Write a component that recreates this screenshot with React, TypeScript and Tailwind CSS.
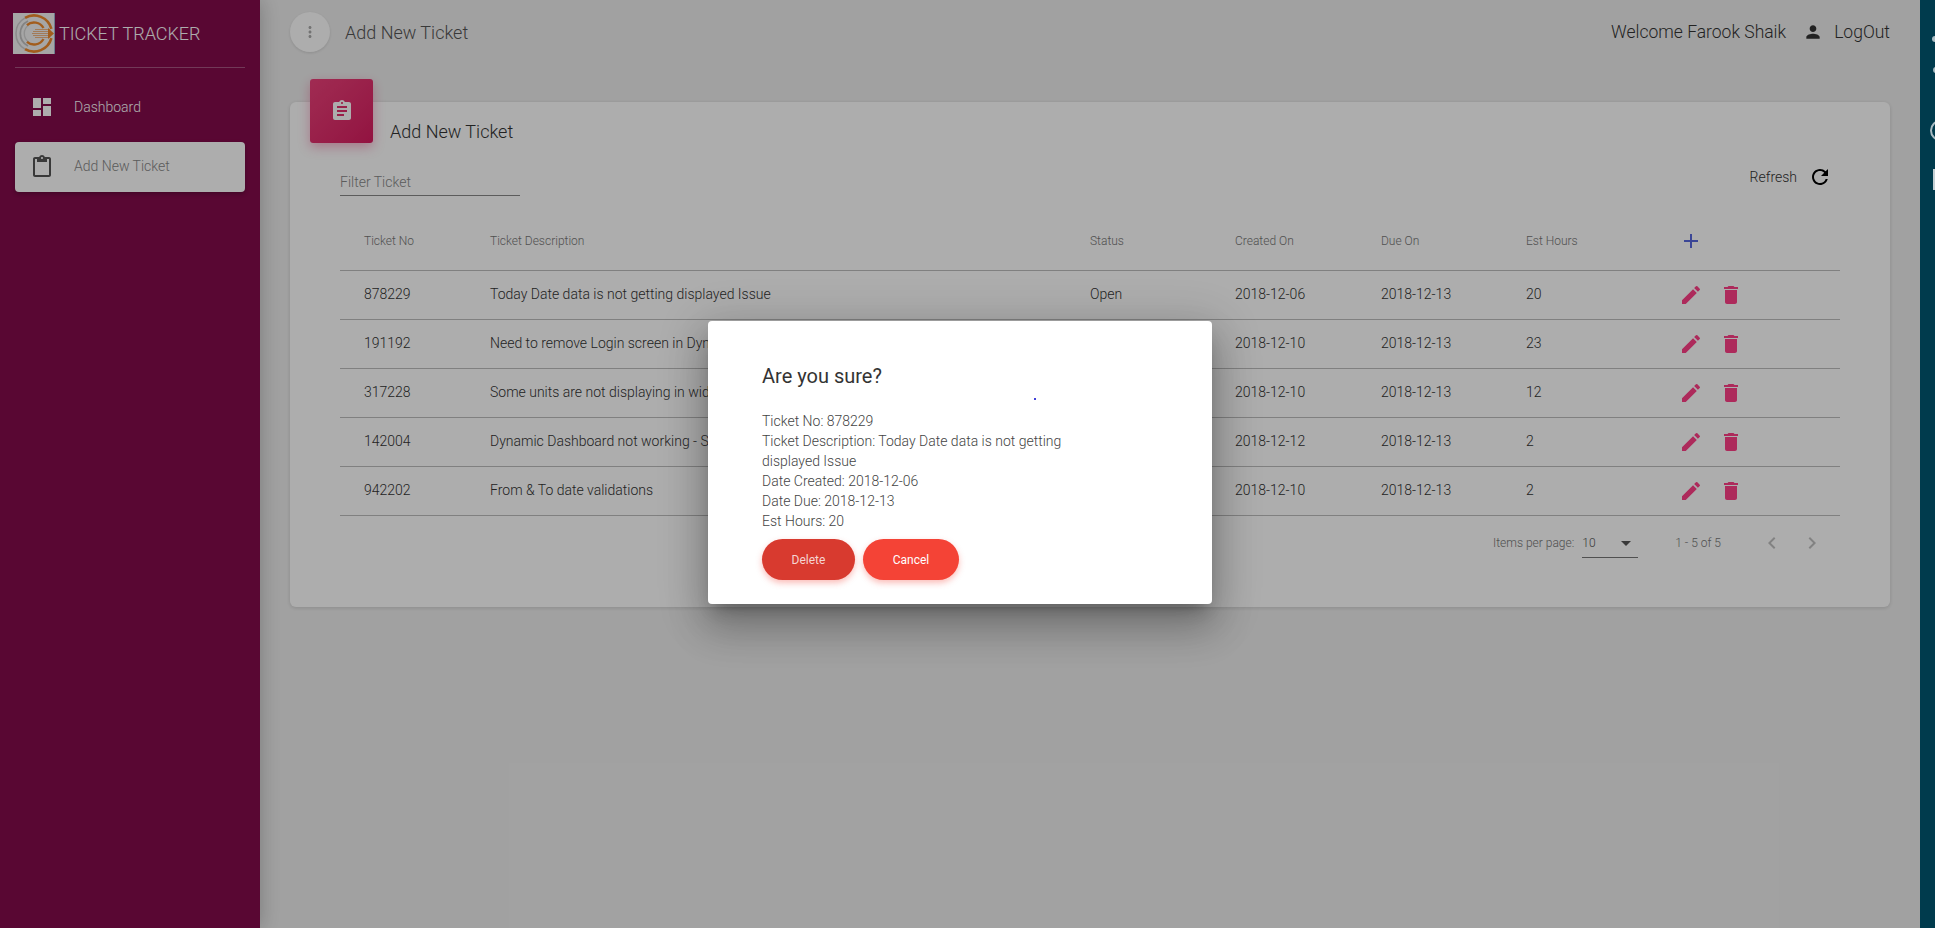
import React from "react";
import {
  MdAdd,
  MdArrowDropDown,
  MdAssignment,
  MdChevronLeft,
  MdChevronRight,
  MdContentPaste,
  MdDashboard,
  MdDelete,
  MdEdit,
  MdMoreVert,
  MdPerson,
  MdRefresh,
} from "react-icons/md";

const tickets = [
  { no: "878229", desc: "Today Date data is not getting displayed Issue", status: "Open", created: "2018-12-06", due: "2018-12-13", hours: "20" },
  { no: "191192", desc: "Need to remove Login screen in Dynamic Dashboard", status: "Open", created: "2018-12-10", due: "2018-12-13", hours: "23" },
  { no: "317228", desc: "Some units are not displaying in widgets", status: "Open", created: "2018-12-10", due: "2018-12-13", hours: "12" },
  { no: "142004", desc: "Dynamic Dashboard not working - Safari", status: "Open", created: "2018-12-12", due: "2018-12-13", hours: "2" },
  { no: "942202", desc: "From & To date validations", status: "Open", created: "2018-12-10", due: "2018-12-13", hours: "2" },
];

const Logo = () => (
  <svg width="42" height="41" viewBox="0 0 42 41" className="shrink-0">
    <rect width="42" height="41" fill="#f5f5f5" />
    <rect x="41" width="1" height="41" fill="#9fb4d0" />
    <g fill="none">
      <path d="M12 4.9 A18 18 0 0 1 38.4 15.8" stroke="#ef8a2c" strokeWidth="2.6" />
      <path d="M38.4 25.2 A18 18 0 0 1 12 36.1" stroke="#ef8a2c" strokeWidth="2.6" />
      <path d="M12 4.9 A18 18 0 0 0 12 36.1" stroke="#cfcfcf" strokeWidth="1.6" />
      <path d="M15 8 A14 14 0 0 0 15 33" stroke="#c2c2c2" strokeWidth="1.8" />
      <path d="M16 12 A10 10 0 0 0 16 29" stroke="#d4d4d4" strokeWidth="1.4" />
      <path d="M13.9 12.1 A11 11 0 0 1 30.5 15" stroke="#ef8a2c" strokeWidth="2.4" />
      <path d="M30.5 26 A11 11 0 0 1 13.9 28.9" stroke="#ef8a2c" strokeWidth="2.4" />
      <path d="M22 16.5H37M20 18.5H37M19 20.5H38M20 22.5H37M22 24.5H37" stroke="#ef9a50" strokeWidth="0.7" />
    </g>
    <path d="M35 15 L41 20.5 L35 26 Z" fill="#ef8a2c" />
  </svg>
);

const App = () => {
  return (
    <div className="flex h-[928px] w-[1935px] overflow-hidden font-['Roboto',sans-serif]">
      <div className="relative flex w-[1920px] shrink-0 bg-[#eeeeee]">
        <aside className="z-10 flex w-[260px] shrink-0 flex-col bg-[#840b4c] shadow-[0_0_20px_rgba(0,0,0,0.25)]">
          <div className="mx-[15px] flex h-[68px] items-start border-b border-white/30 pt-[13px]">
            <div className="-ml-[2px]">
              <Logo />
            </div>
            <span className="ml-[4px] mt-[9px] text-[18px] font-light leading-[24px] text-white">TICKET TRACKER</span>
          </div>
          <nav className="mx-[15px] mt-[14px] flex flex-col gap-[10px]">
            <div className="flex h-[50px] items-center rounded pl-[15px] text-white">
              <MdDashboard size={24} />
              <span className="ml-[20px] text-[14px] font-light">Dashboard</span>
            </div>
            <div className="flex h-[50px] items-center rounded bg-white pl-[15px] text-[#555555] shadow-[0_2px_4px_rgba(0,0,0,0.25)]">
              <MdContentPaste size={24} />
              <span className="ml-[20px] -mt-[2px] text-[14px] font-light text-[#888888]">Add New Ticket</span>
            </div>
          </nav>
        </aside>

        <main className="flex min-w-0 flex-1 flex-col">
          <header className="flex h-[64px] items-center pl-[30px] pr-[30px]">
            <div className="flex h-[40px] w-[40px] items-center justify-center rounded-full bg-white text-[#aaaaaa] shadow-[0_1px_3px_rgba(0,0,0,0.12)]">
              <MdMoreVert size={18} />
            </div>
            <span className="ml-[15px] text-[18px] font-light text-[#555555]">Add New Ticket</span>
            <span className="ml-auto text-[17.5px] font-light text-[#333333]">Welcome Farook Shaik</span>
            <MdPerson size={20} className="ml-[17px] text-[#333333]" />
            <span className="ml-[11px] text-[17.5px] font-light text-[#333333]">LogOut</span>
          </header>

          <section className="relative mx-[30px] mt-[38px] h-[505px] rounded-[6px] bg-white shadow-[0_1px_4px_rgba(0,0,0,0.14)]">
            <div className="absolute -top-[23px] left-[20px] flex h-[64px] w-[63px] items-center justify-center rounded-[3px] bg-gradient-to-br from-[#ec407a] to-[#d81b60] text-white shadow-[0_4px_12px_rgba(233,30,99,0.35)]">
              <MdAssignment size={24} />
            </div>
            <h2 className="pl-[100px] pt-[18px] text-[18px] font-light leading-[24px] text-[#333333]">Add New Ticket</h2>

            <div className="mx-[50px] mt-[24px] flex items-start justify-between">
              <div className="mt-[2px] flex h-[26px] w-[180px] items-center border-b border-[#888888] text-[14px] font-light text-[#888888]">
                Filter Ticket
              </div>
              <div className="-mt-[3px] flex items-center pr-[8px] text-[14px] font-light text-[#333333]">
                <span>Refresh</span>
                <MdRefresh size={24} className="ml-[11px] text-black" />
              </div>
            </div>

            <div className="mx-[50px] mt-[25px]">
              <div className="grid h-[50px] grid-cols-[150px_600px_145px_146px_145px_153px_1fr] items-center border-b border-[#bdbdbd] pb-[9px] text-[12px] font-light text-[#777777]">
                <span className="pl-[24px]">Ticket No</span>
                <span>Ticket Description</span>
                <span>Status</span>
                <span>Created On</span>
                <span>Due On</span>
                <span>Est Hours</span>
                <MdAdd size={24} className="text-[#5868dd]" />
              </div>
              {tickets.map((t) => (
                <div
                  key={t.no}
                  className="grid h-[49px] grid-cols-[150px_600px_145px_146px_145px_153px_1fr] items-center border-b border-[#bdbdbd] pb-[1px] text-[14px] font-light text-[#333333]"
                >
                  <span className="pl-[24px]">{t.no}</span>
                  <span>{t.desc}</span>
                  <span>{t.status}</span>
                  <span>{t.created}</span>
                  <span>{t.due}</span>
                  <span>{t.hours}</span>
                  <div className="flex gap-[16px] text-[#ff3e87]">
                    <MdEdit size={24} />
                    <MdDelete size={24} />
                  </div>
                </div>
              ))}
              <div className="mt-[12px] flex items-start text-[12px] font-light text-[#777777]">
                <div className="ml-[1153px] flex h-[30px] items-center">Items per page:</div>
                <div className="ml-[8px] flex h-[30px] w-[56px] items-center justify-between border-b border-[#777777] text-[#555555]">
                  <span>10</span>
                  <MdArrowDropDown size={24} />
                </div>
                <div className="ml-[37px] flex h-[30px] items-center">1 - 5 of 5</div>
                <div className="ml-[39px] flex h-[30px] items-center gap-[16px] text-[#c0c0c0]">
                  <MdChevronLeft size={24} />
                  <MdChevronRight size={24} />
                </div>
              </div>
            </div>
          </section>
        </main>

        <div className="absolute inset-0 z-20 bg-black/[0.32]" />

        <div
          role="dialog"
          className="absolute left-[708px] top-[321px] z-30 h-[283px] w-[504px] rounded bg-white pl-[54px] pt-[41px] shadow-[0_11px_15px_-7px_rgba(0,0,0,0.25),0_24px_38px_3px_rgba(0,0,0,0.18),0_9px_46px_8px_rgba(0,0,0,0.16)]"
        >
          <h2 className="text-[20px] font-normal leading-[28px] text-[#333333]">Are you sure?</h2>
          <div className="mt-[21px] w-[320px] text-[14px] font-light leading-[20px] text-[#444444]">
            <p>Ticket No: 878229</p>
            <p>Ticket Description: Today Date data is not getting displayed Issue</p>
            <p>Date Created: 2018-12-06</p>
            <p>Date Due: 2018-12-13</p>
            <p>Est Hours: 20</p>
          </div>
          <div className="mt-[8px] flex gap-[8px] text-[12px]">
            <button className="h-[41px] w-[93px] rounded-full bg-[#d83a2f] text-[#f5d5d2] shadow-[0_3px_6px_rgba(244,67,54,0.35)]">Delete</button>
            <button className="h-[41px] w-[96px] rounded-full bg-[#f44336] text-white shadow-[0_3px_6px_rgba(244,67,54,0.35)]">Cancel</button>
          </div>
          <span className="absolute left-[326px] top-[77px] h-[2px] w-[2px] rounded-full bg-[#0000cc]" />
        </div>
      </div>
      <div className="relative w-[15px] shrink-0 overflow-hidden bg-[#003b4d]">
        <span className="absolute left-[12px] top-[36px] h-[6px] w-[6px] rounded-full bg-[#a9bcc3]" />
        <span className="absolute left-[13px] top-[67px] h-[6px] w-[6px] rounded-full bg-[#a9bcc3]" />
        <span className="absolute left-[10px] top-[120px] h-[21px] w-[21px] rounded-full border-2 border-[#a9bcc3]" />
        <span className="absolute left-[13px] top-[169px] h-[21px] w-[4px] bg-[#c5d0d4]" />
      </div>
    </div>
  );
};

export default App;
